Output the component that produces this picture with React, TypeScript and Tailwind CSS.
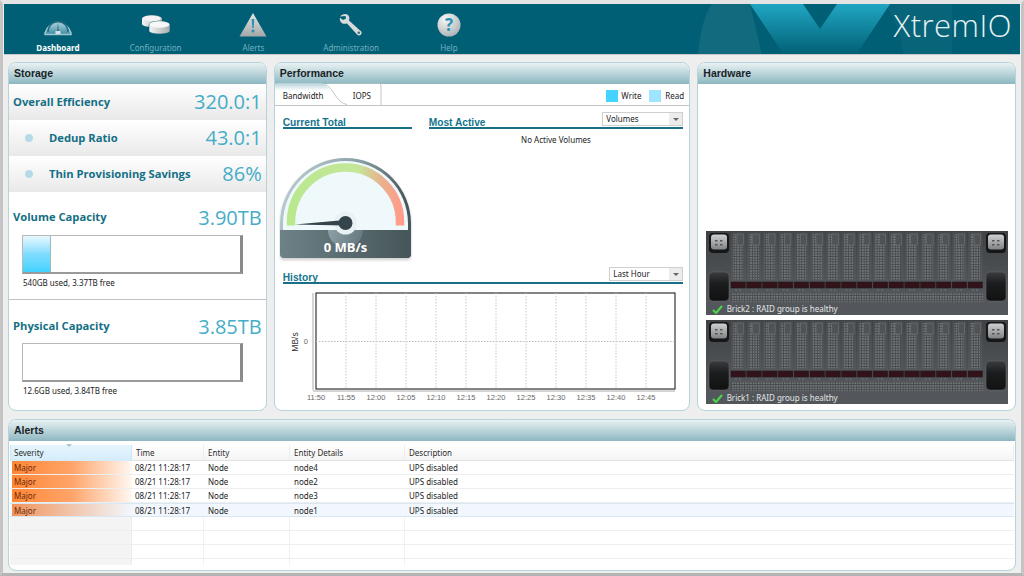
import { ReactNode } from 'react'

const navItems = ['Dashboard', 'Configuration', 'Alerts', 'Administration', 'Help']
const chartTimes = ['11:50', '11:55', '12:00', '12:05', '12:10', '12:15', '12:20', '12:25', '12:30', '12:35', '12:40', '12:45']
const alertRows = [
  { entity: 'node4' },
  { entity: 'node2' },
  { entity: 'node3' },
  { entity: 'node1', selected: true },
]

function NavIcon({ name }: { name: string }) {
  if (name === 'Dashboard') {
    return (
      <svg width="30" height="24" viewBox="0 0 30 24">
        <defs>
          <linearGradient id="dash" x1="0" y1="0" x2="0" y2="1">
            <stop offset="0" stopColor="#a5d0de" />
            <stop offset="1" stopColor="#3f8ba3" />
          </linearGradient>
        </defs>
        <path d="M2 20 A13.5 14 0 0 1 28 20 V21.5 H2 Z" fill="url(#dash)" stroke="#9fc5d1" strokeWidth="1.5" />
        <path d="M5 19 A10 10.5 0 0 1 25 19" fill="none" stroke="#1f6a80" strokeWidth="1.5" />
        <path d="M14.5 18 L15 9 L15.5 18 Z" fill="#1d3f4a" />
        <rect x="12.5" y="18" width="5" height="3" fill="#d6e2e6" />
      </svg>
    )
  }
  if (name === 'Configuration') {
    return (
      <svg width="30" height="24" viewBox="0 0 30 24">
        <defs>
          <linearGradient id="disk" x1="0" y1="0" x2="1" y2="0">
            <stop offset="0" stopColor="#f4f4f4" />
            <stop offset="1" stopColor="#a9adad" />
          </linearGradient>
        </defs>
        <path d="M1 6 C1 1 21 1 21 6 V11 C21 15 1 15 1 11 Z" fill="url(#disk)" />
        <ellipse cx="11" cy="5.5" rx="9" ry="2.8" fill="#f2f2f2" />
        <path d="M8 12 C8 7 29 7 29 12 V18 C29 22 8 22 8 18 Z" fill="url(#disk)" stroke="#005f73" strokeWidth="0.6" />
        <ellipse cx="18.5" cy="11.5" rx="10" ry="3.2" fill="#f7f7f7" />
      </svg>
    )
  }
  if (name === 'Alerts') {
    return (
      <svg width="30" height="24" viewBox="0 0 30 24">
        <defs>
          <linearGradient id="warn" x1="0" y1="0" x2="0" y2="1">
            <stop offset="0" stopColor="#e4e6e6" />
            <stop offset="1" stopColor="#a3a7a8" />
          </linearGradient>
        </defs>
        <path d="M15 0 L28.5 23.5 H1.5 Z" fill="url(#warn)" />
        <path d="M13.7 6 H16.3 L15.7 15 H14.3 Z" fill="#2c8fb0" />
        <circle cx="15" cy="18" r="1.5" fill="#2c8fb0" />
      </svg>
    )
  }
  if (name === 'Administration') {
    return (
      <svg width="26" height="24" viewBox="0 0 26 24">
        <path
          d="M2 3.5 C4 1 8 0 10 2 C11.8 3.7 11.5 6 11 7.5 L21.5 17 C23 18 24 19 23.5 20.5 C23 22.5 21 23 19.5 22 L9 10.5 C6.5 11.2 4 10.8 2.8 9 C1.8 7.5 1.5 6 2 4.8 L5 7 L8 5.5 L7.5 3 Z"
          fill="#d8dadb"
        />
        <circle cx="20.8" cy="19.8" r="1.3" fill="#2f7287" />
      </svg>
    )
  }
  return (
    <svg width="24" height="24" viewBox="0 0 24 24">
      <defs>
        <radialGradient id="help" cx="0.35" cy="0.25" r="0.9">
          <stop offset="0" stopColor="#f6f7f7" />
          <stop offset="1" stopColor="#a3abad" />
        </radialGradient>
      </defs>
      <circle cx="12" cy="12" r="11.5" fill="url(#help)" />
      <text x="12" y="18" textAnchor="middle" fontSize="17" fontWeight="700" fill="#2b91b3" fontFamily="'Open Sans', sans-serif">?</text>
    </svg>
  )
}

function Panel({ title, className, children }: { title: string; className?: string; children: ReactNode }) {
  return (
    <section className={`flex flex-col overflow-hidden rounded-lg border border-[#b5d3da] bg-white ${className ?? ''}`}>
      <h2 className="h-[21px] shrink-0 bg-gradient-to-b from-[#e9f2f3] to-[#8db7c1] pl-[5px] pt-[3px] font-['Liberation_Sans',sans-serif] text-[10.5px] leading-[14px] font-bold text-[#1a2326]">
        {title}
      </h2>
      {children}
    </section>
  )
}

function MetricRow({ label, value, dot }: { label: string; value: string; dot?: boolean }) {
  return (
    <div className="flex h-9 items-center bg-gradient-to-b from-[#ffffff] to-[#e9e9e9] pr-[4px] pl-[4px]">
      {dot && <span className="ml-[12px] mr-[16px] h-2 w-2 rounded-full bg-[#b5dbe8]" />}
      <span className="font-['Open_Sans',sans-serif] text-[11.2px] font-bold text-[#136f86]">{label}</span>
      <span className="ml-auto font-['Open_Sans',sans-serif] text-[20px] text-[#45adc7]">{value}</span>
    </div>
  )
}

function CapacityBar({ percent, note }: { percent: number; note: string }) {
  return (
    <div className="ml-[13px]">
      <div className="h-[39px] w-[221px] border border-[#b8b8b8] border-r-[3px] border-b-2 border-r-[#8a8a8a] border-b-[#9a9a9a] bg-white">
        {percent > 0 && (
          <div className="h-full border-r border-[#9bb] bg-gradient-to-b from-[#e8f8ff] via-[#7fdcff] to-[#3dd2ff]" style={{ width: `${percent}%` }} />
        )}
      </div>
      <p className="mt-[3px] ml-[1px] text-[8px] leading-[12px] text-[#222]">{note}</p>
    </div>
  )
}

function SectionTitle({ title, className, children }: { title: string; className?: string; children?: ReactNode }) {
  return (
    <div className={`flex h-[17px] items-end justify-between border-b-2 border-[#1a6f86] ${className ?? ''}`}>
      <span className="font-['Liberation_Sans',sans-serif] text-[10.2px] leading-[9px] font-bold text-[#14748e]">{title}</span>
      {children}
    </div>
  )
}

function Dropdown({ label, className }: { label: string; className?: string }) {
  return (
    <div className={`mb-[1px] flex h-[14px] items-center justify-between border border-[#cfcfcf] bg-white pl-[3px] text-[8px] text-[#222] ${className ?? ''}`}>
      <span>{label}</span>
      <span className="flex h-full w-[13px] items-center justify-center bg-[#ececec]">
        <span className="h-0 w-0 border-x-[3px] border-t-[3px] border-x-transparent border-t-[#666]" />
      </span>
    </div>
  )
}

function Gauge() {
  return (
    <svg width="134" height="106" viewBox="0 0 134 106" className="block">
      <defs>
        <linearGradient id="rim" x1="0" y1="0" x2="1" y2="0.3">
          <stop offset="0" stopColor="#c4d6da" />
          <stop offset="0.55" stopColor="#8ba0a6" />
          <stop offset="1" stopColor="#47585c" />
        </linearGradient>
        <linearGradient id="band" x1="0" y1="0" x2="1" y2="0">
          <stop offset="0" stopColor="#6d8287" />
          <stop offset="1" stopColor="#465558" />
        </linearGradient>
        <linearGradient id="arc" x1="0" y1="0" x2="1" y2="0">
          <stop offset="0" stopColor="#b9e88f" />
          <stop offset="0.62" stopColor="#c5e69a" />
          <stop offset="0.82" stopColor="#e7b48d" />
          <stop offset="1" stopColor="#ff9c8a" />
        </linearGradient>
        <filter id="soft" x="-10%" y="-10%" width="120%" height="125%">
          <feDropShadow dx="0" dy="2" stdDeviation="1.5" floodColor="#000" floodOpacity="0.2" />
        </filter>
      </defs>
      <g filter="url(#soft)">
        <path d="M1 67.5 A65.5 65.5 0 0 1 132 67.5 V98 Q132 102 128 102 H5 Q1 102 1 98 Z" fill="url(#rim)" />
      </g>
      <path d="M4 67.5 A62.5 62.5 0 0 1 129 67.5 V74 H4 Z" fill="#eff8fb" />
      <path d="M1 74 H49 A17.5 17.5 0 0 0 84 74 H132 V98 Q132 102 128 102 H5 Q1 102 1 98 Z" fill="url(#band)" />
      <path d="M12 69.5 V66 A54.5 54.5 0 0 1 121 66 V69.5" fill="none" stroke="url(#arc)" strokeWidth="8.5" />
      <circle cx="66.5" cy="67" r="11.5" fill="#e8f2f4" />
      <path d="M16 68.5 L66 64 V69.5 Z" fill="#34444a" />
      <circle cx="66.5" cy="67" r="7" fill="#33454a" />
      <text x="66.5" y="96" textAnchor="middle" fontSize="13" fontWeight="700" fill="#fff" fontFamily="'Open Sans', sans-serif">0 MB/s</text>
    </svg>
  )
}

function HistoryChart() {
  const left = 33
  const top = 4
  const right = 392
  const bottom = 100
  const step = 30
  return (
    <svg width="400" height="118" viewBox="0 0 400 118" className="block font-['Liberation_Sans',sans-serif]">
      <rect x={left} y={top} width={right - left} height={bottom - top} fill="#fff" stroke="#333" strokeWidth="1.2" />
      <path d={`M${left - 3} ${top} V${bottom + 1} M${left - 3} ${bottom + 2} H${right}`} fill="none" stroke="#aaa" />
      {chartTimes.slice(1).map((t, i) => (
        <path key={t} d={`M${left + step * (i + 1)} ${top} V${bottom}`} stroke="#c8c8c8" strokeDasharray="1.5 1.5" />
      ))}
      <path d={`M${left} 52.5 H${right}`} stroke="#bbb" strokeDasharray="1.5 1.5" />
      {chartTimes.map((t, i) => (
        <text key={t} x={left + step * i} y="111" textAnchor="middle" fontSize="7.5" fill="#666">{t}</text>
      ))}
      <text x="25" y="55" textAnchor="end" fontSize="7.5" fill="#666">0</text>
      <text transform="translate(15 53) rotate(-90)" textAnchor="middle" fontSize="8.5" fill="#333">MB/s</text>
    </svg>
  )
}

function Brick({ label }: { label: string }) {
  const drives = Array.from({ length: 16 }, (_, i) => i)
  return (
    <div className="w-[302px]">
      <svg width="302" height="72" viewBox="0 0 302 72" className="block">
        <defs>
          <linearGradient id="chassis" x1="0" y1="0" x2="0" y2="1">
            <stop offset="0" stopColor="#3f4245" />
            <stop offset="1" stopColor="#55585c" />
          </linearGradient>
          <linearGradient id="slot" x1="0" y1="0" x2="0" y2="1">
            <stop offset="0" stopColor="#494c4f" />
            <stop offset="1" stopColor="#54575a" />
          </linearGradient>
          <linearGradient id="handle" x1="0" y1="0" x2="0" y2="1">
            <stop offset="0" stopColor="#3a3c3e" />
            <stop offset="0.4" stopColor="#1c1d1e" />
            <stop offset="1" stopColor="#111" />
          </linearGradient>
          <linearGradient id="tag" x1="0" y1="0" x2="0" y2="1">
            <stop offset="0" stopColor="#cfd0d0" />
            <stop offset="1" stopColor="#808284" />
          </linearGradient>
          <pattern id="holes" width="2.6" height="2.6" patternUnits="userSpaceOnUse">
            <rect width="2.6" height="2.6" fill="#484b4e" />
            <rect width="1.7" height="1.7" fill="#74777a" />
          </pattern>
        </defs>
        <rect width="302" height="72" fill="url(#chassis)" />
        {[3, 280].map((x) => (
          <g key={x}>
            <rect x={x} y="2" width="20" height="20" rx="4" fill="#161718" />
            <rect x={x + 2} y="3.5" width="16" height="15" rx="3" fill="url(#tag)" />
            <rect x={x + 6} y="9" width="2.5" height="1.5" fill="#555" />
            <rect x={x + 11} y="9" width="2.5" height="1.5" fill="#555" />
            <rect x={x + 6} y="13" width="2.5" height="1.5" fill="#555" />
            <rect x={x + 11} y="13" width="2.5" height="1.5" fill="#555" />
            <rect x={x} y="41" width="20" height="29" rx="4" fill="url(#handle)" stroke="#6a6d70" strokeWidth="0.5" />
          </g>
        ))}
        {drives.map((i) => {
          const x = 25 + i * 15.8
          return (
            <g key={i}>
              <rect x={x} y="1" width="14.5" height="49" fill="url(#slot)" />
              <rect x={x + 2} y="3" width="10" height="46" fill="url(#holes)" />
              <rect x={x + 6} y="3" width="6.5" height="11" fill="#505356" stroke="#77797c" strokeWidth="0.5" />
              <rect x={x} y="51" width="14.5" height="6" fill="#33121a" stroke="#1c1c1e" strokeWidth="0.5" />
              <path d={`M${x + 4} 59 h2 M${x + 8} 59 h2`} stroke="#85888b" strokeWidth="0.7" />
            </g>
          )
        })}
        <rect x="25" y="62" width="252" height="9" fill="url(#holes)" />
      </svg>
      <div className="flex h-3 items-center bg-[#53575b] pl-[6px] text-[8px] leading-3 text-[#e4e6e6]">
        <svg width="11" height="9" viewBox="0 0 11 9" className="mr-[4px]">
          <path d="M1 5 L4 8 L10 1" fill="none" stroke="#4fd04a" strokeWidth="2.2" />
        </svg>
        {label}
      </div>
    </div>
  )
}

function AlertHeader() {
  const cells = [
    { label: 'Time', cls: 'w-[72px]' },
    { label: 'Entity', cls: 'w-[86px]' },
    { label: 'Entity Details', cls: 'w-[115px]' },
    { label: 'Description', cls: 'flex-1' },
  ]
  return (
    <div className="mx-[1px] mt-1 flex h-4 text-[8px] leading-4 text-[#2b2b2b]">
      <div className="relative w-[122px] border-x border-[#cfe6f3] bg-gradient-to-b from-[#e6f5fd] to-[#d4ecf9] pl-[3px]">
        Severity
        <span className="absolute top-[-1px] left-[55px] h-0 w-0 border-x-[3px] border-t-[3px] border-x-transparent border-t-[#a9c6d6]" />
      </div>
      {cells.map((c) => (
        <div key={c.label} className={`${c.cls} border-b border-[#e3e3e3] border-r border-r-[#ededed] bg-gradient-to-b from-white to-[#f4f4f4] pl-[4px]`}>
          {c.label}
        </div>
      ))}
    </div>
  )
}

function AlertRow({ entity, selected }: { entity: string; selected?: boolean }) {
  return (
    <div className={`mx-[1px] flex h-[14px] border-b text-[8px] leading-[13px] text-[#222] ${selected ? 'border-y border-[#d7e7f4] bg-[#f2f7fd]' : 'border-[#eeeeee]'}`}>
      <div className="w-[122px] pl-[2px]">
        <div className={`h-full pl-[2px] ${selected ? 'bg-gradient-to-r from-[#f0935a] to-transparent' : 'bg-gradient-to-r from-[#ff8633] via-[#ffa468] to-[#fff8f2]'} text-[#6a2a0c]`}>Major</div>
      </div>
      <div className="w-[72px] pl-[3px]">08/21 11:28:17</div>
      <div className="w-[86px] pl-[4px]">Node</div>
      <div className="w-[115px] pl-[4px]">{entity}</div>
      <div className="flex-1 pl-[4px]">UPS disabled</div>
    </div>
  )
}

function EmptyRow({ short }: { short?: boolean }) {
  return (
    <div className={`mx-[1px] flex ${short ? 'h-[6px]' : 'h-[14px] border-b border-[#efefef]'}`}>
      <div className="w-[122px] border-r border-[#ededed] bg-[#f4f4f4]" />
      <div className="w-[72px] border-r border-[#f0f0f0]" />
      <div className="w-[86px] border-r border-[#f0f0f0]" />
      <div className="w-[115px] border-r border-[#f0f0f0]" />
      <div className="flex-1" />
    </div>
  )
}

export default function App() {
  return (
    <div className="flex h-[576px] w-[1024px] flex-col overflow-hidden border-x-[3px] border-t-[4px] border-b-[3px] border-x-[#c4c4c4] border-t-[#e4e4e4] border-b-[#b4b4b4] bg-[#eeeeee] font-['Noto_Sans',sans-serif]">
      {/* Top navigation */}
      <header className="relative mx-[1px] flex h-[51px] shrink-0 overflow-hidden border-b border-[#c8c8c8] bg-[#015f75] pl-[5px]">
        {navItems.map((name, i) => (
          <button key={name} className="relative z-10 flex w-[97.75px] flex-col items-center pt-[8px]">
            <span className="flex h-[25px] items-center">
              <NavIcon name={name} />
            </span>
            <span className={`mt-[5px] text-[8px] leading-3 ${i === 0 ? 'font-bold text-white' : 'text-[#6fb0c0]'}`}>{name}</span>
          </button>
        ))}
        <svg width="330" height="51" viewBox="0 0 330 51" className="absolute top-0 right-0">
          <defs>
            <linearGradient id="logoA" x1="0" y1="0" x2="0" y2="1">
              <stop offset="0" stopColor="#20a6c2" />
              <stop offset="1" stopColor="#015f75" />
            </linearGradient>
          </defs>
          <path d="M8 51 C10 30 14 10 22 0 H60 L72 51 Z" fill="#ffffff" fillOpacity="0.07" />
          <path d="M60 0 H113 L130 25 L147 0 H200 L166 51 H94 Z" fill="url(#logoA)" />
          <path d="M195 0 C205 15 212 35 213 51 H262 V0 Z" fill="#ffffff" fillOpacity="0.03" />
        </svg>
        <span className="absolute top-[1px] right-[8px] z-10 font-['Open_Sans',sans-serif] text-[31px] leading-10 font-light tracking-[0.5px] text-[#e8f1f3]">XtremIO</span>
      </header>

      <main className="flex min-h-0 flex-1 flex-col gap-[8px] px-[5px] pt-[7px] pb-[2px]">
        <div className="flex h-[349px] shrink-0 gap-[7px]">
          {/* Storage */}
          <Panel title="Storage" className="w-[259px]">
            <MetricRow label="Overall Efficiency" value="320.0:1" />
            <MetricRow label="Dedup Ratio" value="43.0:1" dot />
            <MetricRow label="Thin Provisioning Savings" value="86%" dot />
            <div className="mt-[8px] flex h-[35px] items-center px-[4px]">
              <span className="font-['Open_Sans',sans-serif] text-[11.2px] font-bold text-[#136f86]">Volume Capacity</span>
              <span className="ml-auto font-['Open_Sans',sans-serif] text-[20px] text-[#45adc7]">3.90TB</span>
            </div>
            <CapacityBar percent={13} note="540GB used, 3.37TB free" />
            <div className="mt-[10px] border-t border-[#c2c2c2]" />
            <div className="mt-[10px] flex h-[33px] items-center px-[4px]">
              <span className="font-['Open_Sans',sans-serif] text-[11.2px] font-bold text-[#136f86]">Physical Capacity</span>
              <span className="ml-auto font-['Open_Sans',sans-serif] text-[20px] text-[#45adc7]">3.85TB</span>
            </div>
            <CapacityBar percent={0} note="12.6GB used, 3.84TB free" />
          </Panel>

          {/* Performance */}
          <Panel title="Performance" className="w-[417px]">
            <div className="flex h-[22px] shrink-0 items-end border-b border-[#c4c4c4] text-[8px] text-[#222]">
              <div className="relative h-[22px] w-[107px] leading-3">
                <svg width="107" height="22" viewBox="0 0 107 22" className="absolute top-0 left-0">
                  <defs>
                    <linearGradient id="tabTop" x1="0" y1="0" x2="0" y2="1">
                      <stop offset="0" stopColor="#b3d0d7" />
                      <stop offset="0.35" stopColor="#ffffff" />
                    </linearGradient>
                  </defs>
                  <path d="M0 22 V3 Q0 0 3 0 H46 C56 2 60 20 72 22 Z" fill="url(#tabTop)" />
                  <path d="M106 22 V3 Q106 0 103 0 H52" fill="none" stroke="#c4c4c4" />
                  <path d="M0 21.5 H71" stroke="#ffffff" strokeWidth="1.5" />
                  <path d="M50 1 C58 4 61 20 72 21.5" fill="none" stroke="#c4c4c4" />
                </svg>
                <span className="absolute top-[7px] left-[8px]">Bandwidth</span>
                <span className="absolute top-[7px] left-[78px]">IOPS</span>
              </div>
              <div className="ml-auto flex h-full items-center pt-[2px] pr-[1px]">
                <span className="h-3 w-3 bg-[#45d3ff]" />
                <span className="ml-[3px] w-[28px] leading-3">Write</span>
                <span className="h-3 w-3 bg-[#9ee5ff]" />
                <span className="ml-[4px] w-[23px] leading-3">Read</span>
              </div>
            </div>
            <div className="flex shrink-0 gap-[17px] pt-[6px] pr-[6px] pl-2">
              <div className="w-[129px]">
                <SectionTitle title="Current Total" />
                <div className="mt-[27px] ml-[-4px]">
                  <Gauge />
                </div>
              </div>
              <div className="flex-1">
                <SectionTitle title="Most Active">
                  <Dropdown label="Volumes" className="w-[81px]" />
                </SectionTitle>
                <p className="mt-[5px] text-center text-[8px] leading-3 text-[#222]">No Active Volumes</p>
              </div>
            </div>
            <div className="mt-[5px] pr-[6px] pl-2">
              <SectionTitle title="History">
                <Dropdown label="Last Hour" className="w-[74px]" />
              </SectionTitle>
              <div className="mt-[5px]">
                <HistoryChart />
              </div>
            </div>
          </Panel>

          {/* Hardware */}
          <Panel title="Hardware" className="w-[319px]">
            <div className="flex flex-1 flex-col items-center justify-end gap-[5px] pb-[6px]">
              <Brick label="Brick2 : RAID group is healthy" />
              <Brick label="Brick1 : RAID group is healthy" />
            </div>
          </Panel>
        </div>

        {/* Alerts */}
        <Panel title="Alerts" className="min-h-0 flex-1">
          <AlertHeader />
          {alertRows.map((row) => (
            <AlertRow key={row.entity} entity={row.entity} selected={row.selected} />
          ))}
          <EmptyRow />
          <EmptyRow />
          <EmptyRow />
          <EmptyRow short />
        </Panel>
      </main>
    </div>
  )
}
